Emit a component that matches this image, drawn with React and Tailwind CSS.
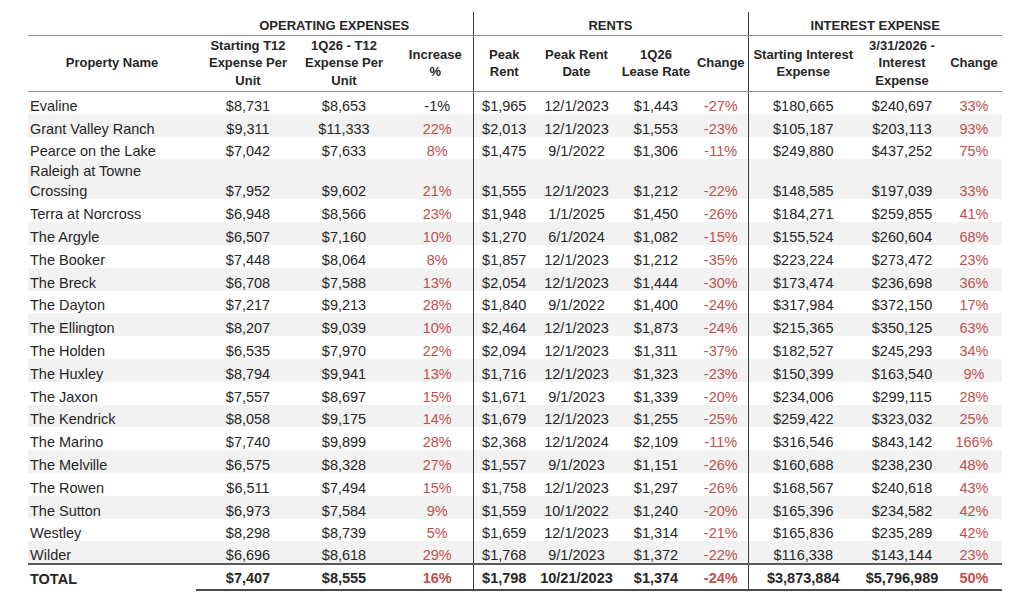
const RED = 'text-[#c0504d]';

const rows = [
  ['Evaline', '$8,731', '$8,653', '-1%', '$1,965', '12/1/2023', '$1,443', '-27%', '$180,665', '$240,697', '33%'],
  ['Grant Valley Ranch', '$9,311', '$11,333', '22%', '$2,013', '12/1/2023', '$1,553', '-23%', '$105,187', '$203,113', '93%'],
  ['Pearce on the Lake', '$7,042', '$7,633', '8%', '$1,475', '9/1/2022', '$1,306', '-11%', '$249,880', '$437,252', '75%'],
  ['Raleigh at Towne Crossing', '$7,952', '$9,602', '21%', '$1,555', '12/1/2023', '$1,212', '-22%', '$148,585', '$197,039', '33%'],
  ['Terra at Norcross', '$6,948', '$8,566', '23%', '$1,948', '1/1/2025', '$1,450', '-26%', '$184,271', '$259,855', '41%'],
  ['The Argyle', '$6,507', '$7,160', '10%', '$1,270', '6/1/2024', '$1,082', '-15%', '$155,524', '$260,604', '68%'],
  ['The Booker', '$7,448', '$8,064', '8%', '$1,857', '12/1/2023', '$1,212', '-35%', '$223,224', '$273,472', '23%'],
  ['The Breck', '$6,708', '$7,588', '13%', '$2,054', '12/1/2023', '$1,444', '-30%', '$173,474', '$236,698', '36%'],
  ['The Dayton', '$7,217', '$9,213', '28%', '$1,840', '9/1/2022', '$1,400', '-24%', '$317,984', '$372,150', '17%'],
  ['The Ellington', '$8,207', '$9,039', '10%', '$2,464', '12/1/2023', '$1,873', '-24%', '$215,365', '$350,125', '63%'],
  ['The Holden', '$6,535', '$7,970', '22%', '$2,094', '12/1/2023', '$1,311', '-37%', '$182,527', '$245,293', '34%'],
  ['The Huxley', '$8,794', '$9,941', '13%', '$1,716', '12/1/2023', '$1,323', '-23%', '$150,399', '$163,540', '9%'],
  ['The Jaxon', '$7,557', '$8,697', '15%', '$1,671', '9/1/2023', '$1,339', '-20%', '$234,006', '$299,115', '28%'],
  ['The Kendrick', '$8,058', '$9,175', '14%', '$1,679', '12/1/2023', '$1,255', '-25%', '$259,422', '$323,032', '25%'],
  ['The Marino', '$7,740', '$9,899', '28%', '$2,368', '12/1/2024', '$2,109', '-11%', '$316,546', '$843,142', '166%'],
  ['The Melville', '$6,575', '$8,328', '27%', '$1,557', '9/1/2023', '$1,151', '-26%', '$160,688', '$238,230', '48%'],
  ['The Rowen', '$6,511', '$7,494', '15%', '$1,758', '12/1/2023', '$1,297', '-26%', '$168,567', '$240,618', '43%'],
  ['The Sutton', '$6,973', '$7,584', '9%', '$1,559', '10/1/2022', '$1,240', '-20%', '$165,396', '$234,582', '42%'],
  ['Westley', '$8,298', '$8,739', '5%', '$1,659', '12/1/2023', '$1,314', '-21%', '$165,836', '$235,289', '42%'],
  ['Wilder', '$6,696', '$8,618', '29%', '$1,768', '9/1/2023', '$1,372', '-22%', '$116,338', '$143,144', '23%'],
];

const total = ['TOTAL', '$7,407', '$8,555', '16%', '$1,798', '10/21/2023', '$1,374', '-24%', '$3,873,884', '$5,796,989', '50%'];

// column widths in px, centers line up with the spreadsheet
const widths = [168, 104, 88, 85, 62, 83, 76, 54, 110, 88, 56];

const bar = 'border-l-[1.5px] border-l-[#3a3a3a]';

const isRed = (i, v) => (i === 3 && !v.startsWith('-')) || i === 7 || i === 10;

const cellClass = (i, v) => {
  let c = 'p-0 align-bottom whitespace-nowrap ';
  if (i === 0) c += 'text-left pl-[2px] ';
  else c += 'text-center ';
  if (i === 3) c += 'pl-[14px] ';
  if (i === 4 || i === 8) c += bar + ' ';
  if (isRed(i, v)) c += RED;
  return c;
};

const Header = ({ children, i }) => (
  <th
    className={`p-0 align-middle text-center font-bold text-[13px] leading-[17.5px] whitespace-nowrap border-b-[1.5px] border-b-[#8a8a8a] ${
      i === 4 || i === 8 ? bar : ''
    } ${i === 3 ? 'pl-[10px]' : ''}`}
  >
    {children}
  </th>
);

export default function App() {
  return (
    <div className="min-h-screen bg-white text-[#262626] font-['Liberation_Sans',Arial,sans-serif]">
      <table className="table-fixed border-collapse ml-[28px] mt-[12px] w-[974px]">
        <colgroup>
          {widths.map((w, i) => (
            <col key={i} style={{ width: w }} />
          ))}
        </colgroup>
        <thead>
          <tr className="h-[23px]">
            <th className="p-0 border-b-[1.5px] border-b-[#8a8a8a]"></th>
            <th colSpan={3} className="p-0 pb-[1px] align-bottom text-center font-bold text-[13px] leading-[17px] border-b-[1.5px] border-b-[#8a8a8a]">
              OPERATING EXPENSES
            </th>
            <th colSpan={4} className={`p-0 pb-[1px] align-bottom text-center font-bold text-[13px] leading-[17px] border-b-[1.5px] border-b-[#8a8a8a] ${bar}`}>
              RENTS
            </th>
            <th colSpan={3} className={`p-0 pb-[1px] align-bottom text-center font-bold text-[13px] leading-[17px] border-b-[1.5px] border-b-[#8a8a8a] ${bar}`}>
              INTEREST EXPENSE
            </th>
          </tr>
          <tr className="h-[56px]">
            <Header i={0}>Property Name</Header>
            <Header i={1}>
              Starting T12
              <br />
              Expense Per
              <br />
              Unit
            </Header>
            <Header i={2}>
              1Q26 - T12
              <br />
              Expense Per
              <br />
              Unit
            </Header>
            <Header i={3}>
              Increase
              <br />%
            </Header>
            <Header i={4}>
              Peak
              <br />
              Rent
            </Header>
            <Header i={5}>
              Peak Rent
              <br />
              Date
            </Header>
            <Header i={6}>
              1Q26
              <br />
              Lease Rate
            </Header>
            <Header i={7}>Change</Header>
            <Header i={8}>
              Starting Interest
              <br />
              Expense
            </Header>
            <Header i={9}>
              3/31/2026 -
              <br />
              Interest
              <br />
              Expense
            </Header>
            <Header i={10}>Change</Header>
          </tr>
        </thead>
        <tbody className="text-[14.5px] leading-[16px]">
          {rows.map((r, ri) => (
            <tr
              key={r[0]}
              className={`${ri === 3 ? 'h-[40px]' : 'h-[22.8px]'} ${ri % 2 === 1 ? 'bg-[#f2f2f2]' : 'bg-white'}`}
            >
              {r.map((v, i) => (
                <td key={i} className={cellClass(i, v)}>
                  {ri === 3 && i === 0 ? (
                    <span className="block leading-[20px] -mb-[2px]">
                      Raleigh at Towne
                      <br />
                      Crossing
                    </span>
                  ) : (
                    v
                  )}
                </td>
              ))}
            </tr>
          ))}
          <tr className="h-[26px] font-bold">
            {total.map((v, i) => (
              <td
                key={i}
                className={`${cellClass(i, v)} pb-[3px] border-t-2 border-t-[#5a5a5a] ${
                  i === 0 ? '' : 'border-b-2 border-b-[#4a4a4a]'
                }`}
              >
                {v}
              </td>
            ))}
          </tr>
        </tbody>
      </table>
    </div>
  );
}
